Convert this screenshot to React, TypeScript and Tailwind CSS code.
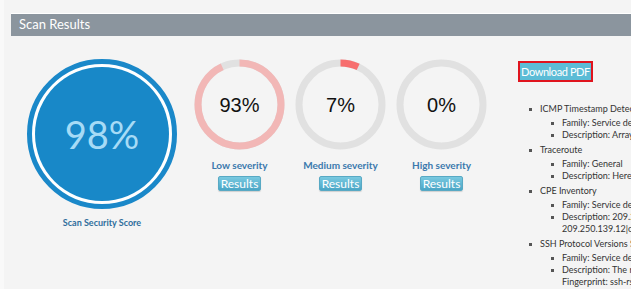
import React from 'react';

interface Severity {
  label: string;
  pct: number;
  color: string;
}

const severities: Severity[] = [
  { label: 'Low severity', pct: 93, color: '#f2b7b6' },
  { label: 'Medium severity', pct: 7, color: '#f76e6e' },
  { label: 'High severity', pct: 0, color: '#e0403f' },
];

const Ring: React.FC<{ pct: number; color: string }> = ({ pct, color }) => {
  const r = 41.5;
  const c = 2 * Math.PI * r;
  return (
    <div className="relative w-[91px] h-[91px]">
      <svg width="91" height="91" viewBox="0 0 91 91" className="block">
        <circle cx="45.5" cy="45.5" r={r} fill="none" stroke="#e1e1e1" strokeWidth="7" />
        {pct > 0 && (
          <circle
            cx="45.5"
            cy="45.5"
            r={r}
            fill="none"
            stroke={color}
            strokeWidth="7"
            strokeDasharray={`${(c * pct) / 100} ${c}`}
            transform="rotate(-90 45.5 45.5)"
          />
        )}
      </svg>
      <div className="absolute inset-0 flex items-center justify-center text-[20px] text-[#111] font-['Liberation_Sans',Arial,sans-serif]">
        {pct}%
      </div>
    </div>
  );
};

const Bullet = () => <span className="inline-block w-[3px] h-[3px] bg-[#555] mr-[8px] mt-[5px] shrink-0" />;

const findings = [
  {
    name: 'ICMP Timestamp Detection',
    sub: [['Family: Service detection'], ['Description: Arrays of time responses']],
  },
  {
    name: 'Traceroute',
    sub: [['Family: General'], ['Description: Here is the route from']],
  },
  {
    name: 'CPE Inventory',
    sub: [['Family: Service detection'], ['Description: 209.250.139.12|cpe:/o:linux', '209.250.139.12|cpe:/a:openbsd']],
  },
  {
    name: 'SSH Protocol Versions Supported',
    sub: [
      ['Family: Service detection'],
      ['Description: The remote SSH daemon', 'Fingerprint: ssh-rsa 2048', 'Sha1: 15:f9:0d:4e:2a:91'],
    ],
  },
];

export default function App() {
  return (
    <div className="w-[631px] h-[289px] overflow-hidden bg-[#f9f9f9] pl-[4px] font-['Lato',sans-serif]">
      <div className="h-full bg-[#f4f4f4] pl-[7px] pt-[13px]">
        <div className="w-[700px] border-t border-white h-[23px] bg-[#8b959e] text-white text-[13px] pl-[8px] flex items-center">
          Scan Results
        </div>

        <div className="flex mt-[23px]">
          {/* score */}
          <div className="ml-[16px] w-[150px] flex flex-col items-center">
            <div className="w-[150px] h-[150px] rounded-full border-[5px] border-[#1a88c9] bg-white p-[3px]">
              <div className="w-full h-full rounded-full bg-[#1888c8] flex items-center justify-center text-[38px] text-[#a6dbf6] leading-none">
                98%
              </div>
            </div>
            <div className="mt-[7px] text-[9px] font-bold text-[#2f6e9c]">Scan Security Score</div>
          </div>

          {/* severities */}
          <div className="ml-[12px] flex">
            {severities.map((s) => (
              <div key={s.label} className="w-[101px] flex flex-col items-center">
                <Ring pct={s.pct} color={s.color} />
                <div className="mt-[9px] text-[10px] font-bold text-[#3b79ad] leading-[13px]">{s.label}</div>
                <button className="mt-[4px] h-[15px] w-[43px] rounded-[2px] border border-[#58a9c4] bg-gradient-to-b from-[#79c9e0] to-[#4aa6c6] text-white text-[12px] leading-[13px] shadow-[0_1px_1px_rgba(0,0,0,0.15)]">
                  Results
                </button>
              </div>
            ))}
          </div>

          {/* pdf + list */}
          <div className="ml-[26px] -mt-[1px] w-[220px]">
            <button className="h-[21px] px-[1px] border-2 border-[#e0141e] bg-[#5cbcd6] text-white text-[11px] tracking-[-0.4px] leading-none">
              Download PDF
            </button>
            <ul className="mt-[21px] ml-[11px] text-[9px] text-[#333] leading-[12px]">
              {findings.map((f) => (
                <li key={f.name} className="mb-[3px]">
                  <div className="flex whitespace-nowrap">
                    <Bullet />
                    {f.name}
                  </div>
                  <ul className="mt-[2px] ml-[22px]">
                    {f.sub.map((lines) => (
                      <li key={lines[0]} className="flex whitespace-nowrap">
                        <Bullet />
                        <div>
                          {lines.map((l) => (
                            <div key={l}>{l}</div>
                          ))}
                        </div>
                      </li>
                    ))}
                  </ul>
                </li>
              ))}
            </ul>
          </div>
        </div>
      </div>
    </div>
  );
}
